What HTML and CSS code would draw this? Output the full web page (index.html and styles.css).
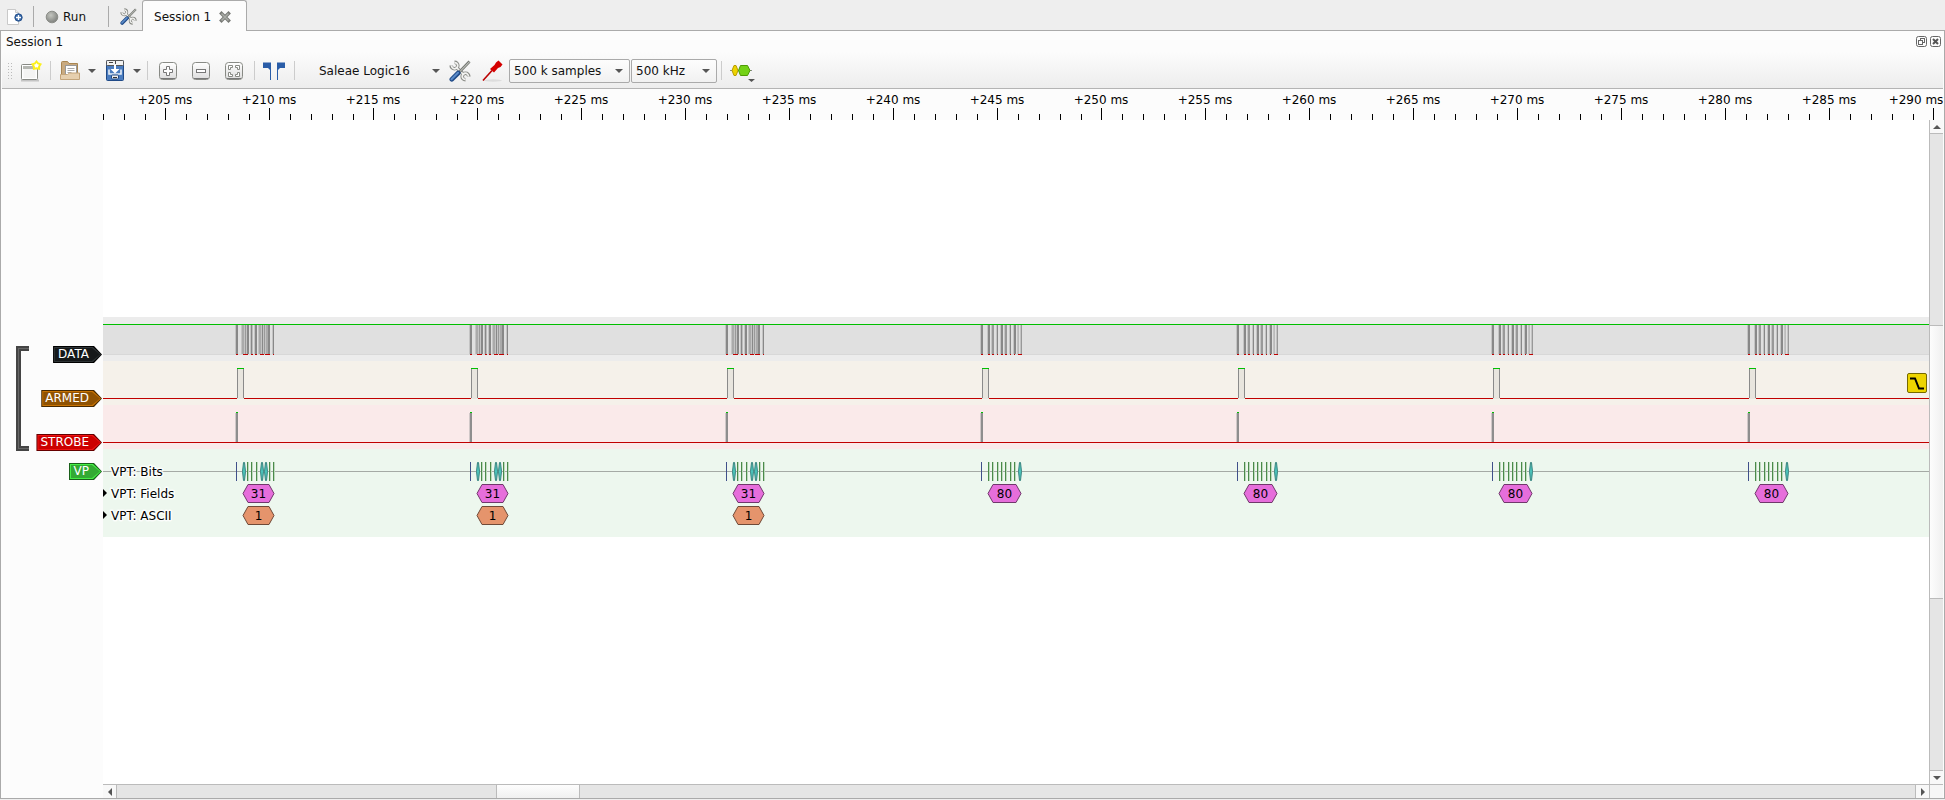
FILE: index.html
```
<!DOCTYPE html>
<html lang="en">
<head>
  <meta charset="UTF-8" />
  <meta name="viewport" content="width=device-width, initial-scale=1.0" />
  <title>Session 1</title>
  <link rel="stylesheet" href="styles.css">
</head>
<body>
  <!-- shared icons -->
  <svg class="defs" width="0" height="0" aria-hidden="true">
    <defs>
      <linearGradient id="metal" x1="0" y1="0" x2="0" y2="1">
        <stop offset="0" stop-color="#ffffff"/>
        <stop offset="1" stop-color="#dcdcdc"/>
      </linearGradient>
      <radialGradient id="ball" cx="0.4" cy="0.35" r="0.6">
        <stop offset="0" stop-color="#c4c6c0"/>
        <stop offset="1" stop-color="#858783"/>
      </radialGradient>
      <symbol id="tools" viewBox="0 0 22 22">
        <g fill="none" stroke="#888a85" stroke-width="3.600">
          <path d="M7 7l8 8"/>
          <path d="M5.500 2.200a3.300 3.300 0 1 1-3.300 3.300"/>
          <path d="M16.500 19.800a3.300 3.300 0 1 1 3.300-3.300"/>
        </g>
        <g fill="none" stroke="#f2f2f0" stroke-width="1.700">
          <path d="M7 7l8 8"/>
          <path d="M5.500 2.600a3.100 3.100 0 1 1-2.900 2.900"/>
          <path d="M16.500 19.400a3.100 3.100 0 1 1 2.900-2.900"/>
        </g>
        <path d="M20.500 1.500 9.500 13" stroke="#777975" stroke-width="2.800"/>
        <path d="M20.500 1.800 9.800 12.700" stroke="#d3d7cf" stroke-width="1"/>
        <path d="M9.200 13 2.800 19.400" stroke="#204a87" stroke-width="4.600" stroke-linecap="round"/>
        <path d="M9 12.800 2.500 19.200" stroke="#5b8bc9" stroke-width="2" stroke-linecap="round"/>
      </symbol>
      <symbol id="key" viewBox="0 0 18 18">
        <rect x=".5" y=".5" width="17" height="17" rx="3" fill="url(#metal)" stroke="#888a85"/>
        <path d="M2 16.500h14" stroke="#777" stroke-width="1"/>
      </symbol>
    </defs>
  </svg>

  <header class="tabbar">
    <button class="flat add" aria-label="New session">
      <svg width="16" height="16" viewBox="0 0 16 16">
        <path d="M.5.500h8l3 3v12H.5z" fill="#fff" stroke="#c9c9c9"/>
        <path d="M8.500.500v3h3" fill="#eee" stroke="#c9c9c9"/>
        <circle cx="11.500" cy="8.500" r="3.700" fill="#3465a4" stroke="#2a5590"/>
        <path d="M11.500 6v5M9 8.500h5" stroke="#fff" stroke-width="1.400"/>
      </svg>
    </button>
    <span class="bar-line"></span>
    <button class="flat run">
      <svg width="14" height="14" viewBox="0 0 14 14"><circle cx="7" cy="7" r="5.800" fill="url(#ball)" stroke="#8b8d88"/></svg>
      Run
    </button>
    <span class="bar-line"></span>
    <button class="flat settings" aria-label="Settings"><svg width="17" height="17"><use href="#tools"/></svg></button>
    <div class="tab">
      <span>Session 1</span>
      <button class="flat" aria-label="Close session">
        <svg width="12" height="12" viewBox="0 0 12 12"><path d="M2.500 2.500l7 7M9.500 2.500l-7 7" stroke="#777975" stroke-width="3.400" stroke-linecap="square"/><path d="M2.500 2.500l7 7M9.500 2.500l-7 7" stroke="#aaaca7" stroke-width="1.600"/></svg>
      </button>
    </div>
  </header>

  <main class="pane">
    <div class="dock-title">
      <span>Session 1</span>
      <button class="flat" aria-label="Float">
        <svg width="11" height="11" viewBox="0 0 11 11" fill="none" stroke="#666"><rect x=".5" y=".5" width="10" height="10" rx="2"/><rect x="4.500" y="2.500" width="4" height="4"/><rect x="2.500" y="4.500" width="4" height="4" fill="#fcfcfc"/></svg>
      </button>
      <button class="flat" aria-label="Close">
        <svg width="11" height="11" viewBox="0 0 11 11" fill="none" stroke="#666"><rect x=".5" y=".5" width="10" height="10" rx="2"/><path d="M3 3l5 5M8 3l-5 5" stroke="#555" stroke-width="2"/></svg>
      </button>
    </div>

    <div class="toolbar">
      <span class="grip"></span>
      <button class="flat new" aria-label="New view">
        <svg width="22" height="22" viewBox="0 0 22 22">
          <path d="M1 20.500h18" stroke="#999" stroke-width="2" opacity=".5"/>
          <rect x="1.500" y="4.500" width="16" height="15" rx="1" fill="#fff" stroke="#888a85"/>
          <path d="M3 7.500h13" stroke="#b5b7b2" stroke-width="3"/>
          <rect x="3.500" y="9" width="12" height="9" fill="#f4f4f3"/>
          <path d="M16.500 1.500l1.600 2 2.400.8-1.400 2.200v2.300l-2.600-.6-2.600.6v-2.300l-1.400-2.200 2.400-.8z" fill="#fff" stroke="#fcf01c" stroke-width="2"/>
        </svg>
      </button>
      <span class="sep"></span>
      <button class="flat open" aria-label="Open">
        <svg width="20" height="21" viewBox="0 0 20 21">
          <path d="M1.500 19V2.500q0-1 1-1h5l1.500 2h8.500V19z" fill="#c9aa80" stroke="#a98652"/>
          <rect x="5.500" y="5.500" width="11" height="10" fill="#fff" stroke="#999"/>
          <path d="M7.500 8.500h7M7.500 10.500h7M7.500 12.500h4" stroke="#aaa"/>
          <path d="M.5 19.500v-5h7l2-1.500h10v6.500z" fill="#e6cfae" stroke="#c4a57b"/>
        </svg>
        <i class="caret"></i>
      </button>
      <button class="flat save" aria-label="Save">
        <svg width="18" height="21" viewBox="0 0 18 21">
          <rect x=".5" y=".5" width="17" height="20" rx="1" fill="#4a7cbf" stroke="#204a87"/>
          <rect x=".5" y=".5" width="17" height="5" rx="1" fill="#f2f2f2" stroke="#555"/>
          <path d="M3 9.500v4.500h12V9.500" fill="none" stroke="#e8eef6" stroke-width="1.600"/>
          <path d="M8 5h2v4h3.500L9 13.500 4.500 9H8z" fill="#fff"/>
          <rect x="5.500" y="15" width="7" height="4" rx="1" fill="#eee" stroke="#204a87"/>
          <path d="M7 17.500h4" stroke="#333"/>
          <path d="M3 2.500h4M9.500 1v3" stroke="#444"/>
        </svg>
        <i class="caret"></i>
      </button>
      <span class="sep"></span>
      <div class="zooms">
        <button class="flat" aria-label="Zoom in">
          <svg width="18" height="18" viewBox="0 0 18 18"><use href="#key"/><path d="M7.500 4.500h3v3h3v3h-3v3h-3v-3h-3v-3h3z" fill="#fff" stroke="#777"/></svg>
        </button>
        <button class="flat" aria-label="Zoom out">
          <svg width="18" height="18" viewBox="0 0 18 18"><use href="#key"/><rect x="4.500" y="7.500" width="9" height="3" fill="#fff" stroke="#777"/></svg>
        </button>
        <button class="flat" aria-label="Zoom to fit">
          <svg width="18" height="18" viewBox="0 0 18 18"><use href="#key"/><path d="M3.500 3.500h4v2h-2v2h-2zM14.500 3.500h-4v2h2v2h2zM3.500 14.500h4v-2h-2v-2h-2zM14.500 14.500h-4v-2h2v-2h2z" fill="#fff" stroke="#888a85"/></svg>
        </button>
      </div>
      <span class="sep"></span>
      <button class="flat cursors" aria-label="Show cursors">
        <svg width="22" height="18" viewBox="0 0 22 18"><path d="M0 .500h8V18H7V8L5 6H0zM22 .500h-8V18h1V8l2-2h5z" fill="#2a5da8"/></svg>
      </button>
      <span class="sep"></span>
      <label class="combo plain device">
        <select aria-label="Device"><option>Saleae Logic16</option></select>
      </label>
      <button class="flat configure" aria-label="Configure device"><svg width="22" height="22"><use href="#tools"/></svg></button>
      <button class="flat probe" aria-label="Channels">
        <svg width="21" height="22" viewBox="0 0 21 22">
          <ellipse cx="11" cy="20.500" rx="9" ry="1.200" fill="#ddd"/>
          <path d="M1 20.500l9-10" stroke="#b00" stroke-width="1.600"/>
          <path d="M8 9l4.500-4L14 2.500 16.500.500l4 4-2 2.500-2.500 1-4 4.500z" fill="#d40000"/>
        </svg>
      </button>
      <label class="combo samples"><select aria-label="Sample count"><option>500 k samples</option></select></label>
      <label class="combo rate"><select aria-label="Sample rate"><option>500 kHz</option></select></label>
      <span class="sep"></span>
      <button class="flat decoder" aria-label="Add protocol decoder">
        <svg width="26" height="22" viewBox="0 0 26 22">
          <path d="M0 10.500h22" stroke="#888"/>
          <path d="M4 5.500h2l2 5-2 5H4l-2-5z" fill="#edd400" stroke="#b89b00"/>
          <path d="M10.500 5.500h7l2.500 5-2.500 5h-7L8.500 10.500z" fill="#73d216" stroke="#4e9a06"/>
          <path d="M18 19h7l-3.500 3z" fill="#555"/>
        </svg>
      </button>
    </div>

    <div class="view">
      <svg class="ruler" id="ruler"></svg>

      <div class="heads">
        <div class="bracket"></div>
        <div class="tags">
          <button class="tag data"><span>DATA</span></button>
          <button class="tag armed"><span>ARMED</span></button>
          <button class="tag strobe"><span>STROBE</span></button>
          <button class="tag vp"><span>VP</span></button>
        </div>
      </div>

      <div class="plot">
        <svg class="trace data" id="data"></svg>
        <div class="row">
          <svg class="trace armed" id="armed"></svg>
          <svg class="trigger" width="20" height="20" viewBox="0 0 20 20">
            <rect x=".5" y=".5" width="19" height="19" rx="1.500" fill="#edd400" stroke="#766a00"/>
            <path d="M3 5.500h5l4 10h5" fill="none" stroke="#000" stroke-width="2"/>
          </svg>
        </div>
        <svg class="trace strobe" id="strobe"></svg>
        <svg class="trace vp" id="vp"></svg>
      </div>

      <div class="scroll vertical">
        <button aria-label="Scroll up"><svg width="8" height="4"><path d="M0 4l4-4 4 4z" fill="#555"/></svg></button>
        <span class="track before"></span><span class="thumb"></span><span class="track after"></span>
        <button aria-label="Scroll down"><svg width="8" height="4"><path d="M0 0l4 4 4-4z" fill="#555"/></svg></button>
      </div>
      <div class="scroll horizontal">
        <button aria-label="Scroll left"><svg width="4" height="8"><path d="M4 0L0 4l4 4z" fill="#555"/></svg></button>
        <span class="track before"></span><span class="thumb"></span><span class="track after"></span>
        <button aria-label="Scroll right"><svg width="4" height="8"><path d="M0 0l4 4-4 4z" fill="#555"/></svg></button>
      </div>
      <div class="corner"></div>
    </div>
  </main>

  <script src="traces.js"></script>
</body>
</html>
```
FILE: styles.css
```
* {
  box-sizing: border-box;
}
body {
  margin: 0;
  min-height: 100vh;
  display: flex;
  flex-direction: column;
  background: #eee;
  color: #111;
  font: 12px/16px "DejaVu Sans", Verdana, sans-serif;
  padding-bottom: 1px;
}
svg {
  display: block;
  flex: none;
}
.defs {
  position: absolute;
}
button, select {
  font: inherit;
  color: inherit;
}
.flat {
  display: flex;
  align-items: center;
  padding: 0;
  border: 0;
  background: none;
}

/* tabs */
.tabbar {
  display: flex;
  align-items: center;
  height: 31px;
  margin-bottom: -1px;
  padding: 2px 0 0 7px;
}
.bar-line {
  width: 1px;
  height: 21px;
  background: #aaa;
  margin-left: 10px;
}
.run {
  gap: 4px;
  margin-left: 11px;
  margin-right: 12px;
}
.settings {
  margin-left: 11px;
}
.tab {
  display: flex;
  align-items: center;
  align-self: flex-end;
  gap: 8px;
  height: 31px;
  margin-left: 5px;
  padding: 2px 15px 0 11px;
  border: 1px solid #aaa;
  border-bottom: 0;
  border-radius: 3px 3px 0 0;
  background: #fcfcfc;
  z-index: 1;
}

/* session pane */
.pane {
  flex: 1;
  display: flex;
  flex-direction: column;
  border: 1px solid #aaa;
  background: #fcfcfc;
}
.dock-title {
  display: flex;
  align-items: center;
  gap: 3px;
  height: 21px;
  padding: 0 3px 0 5px;
}
.dock-title span {
  flex: 1;
}
.toolbar {
  display: flex;
  align-items: center;
  height: 37px;
  margin: 0 1px;
  padding: 1px 0 0 5px;
  border-bottom: 1px solid #b4b4b4;
  background: linear-gradient(#fcfcfc, #ededed);
}
.grip {
  width: 5px;
  height: 17px;
  background: radial-gradient(circle, #bbb 1px, transparent 1px) 0 0 / 3px 3px;
}
.sep {
  width: 1px;
  height: 19px;
  background: #ccc;
}
.caret {
  width: 0;
  border: 4px solid transparent;
  border-top-color: #555;
  border-bottom: 0;
}
.new {
  margin: 0 8px 0 8px;
}
.open {
  gap: 8px;
  margin-left: 9px;
}
.save {
  gap: 9px;
  margin: 0 6px 0 10px;
}
.zooms {
  display: flex;
  gap: 15px;
  margin: 0 11px 0 11px;
}
.cursors {
  margin: 0 9px 0 8px;
}
.combo {
  display: flex;
  align-items: center;
  position: relative;
}
.combo::after {
  content: "";
  position: absolute;
  right: 7px;
  border: 4px solid transparent;
  border-top-color: #555;
  border-bottom: 0;
  pointer-events: none;
}
.combo select {
  appearance: none;
  width: 100%;
  height: 24px;
  padding: 0 4px;
  border: 1px solid #aaa;
  border-radius: 2px;
  background: linear-gradient(#fdfdfd, #f1f1f1);
}
.combo.plain select {
  border-color: transparent;
  background: none;
}
.device {
  width: 130px;
  margin-left: 19px;
}
.combo.device::after {
  right: 4px;
}
.configure {
  margin-left: 5px;
}
.probe {
  margin: 0 6px 0 11px;
}
.samples {
  width: 121px;
}
.rate {
  width: 86px;
  margin: 0 4px 0 1px;
}
.decoder {
  margin-left: 8px;
}

/* trace view */
.view {
  flex: 1;
  display: grid;
  grid-template-columns: 102px 1fr 14px;
  grid-template-rows: 31px 1fr 14px;
  margin-right: 1px;
}
.ruler {
  grid-column: 2 / 4;
  width: 100%;
  height: 31px;
}
.heads {
  grid-row: 2 / 4;
  grid-column: 1;
  display: flex;
  justify-content: space-between;
  align-items: flex-start;
  padding: 226px 1px 0 15px;
}
.bracket {
  width: 13px;
  height: 105px;
  border: 5px double #444;
  border-right: 0;
  background: #666;
  clip-path: polygon(0 0, 100% 0, 100% 5px, 5px 5px, 5px calc(100% - 5px), 100% calc(100% - 5px), 100% 100%, 0 100%);
}
.tags {
  display: flex;
  flex-direction: column;
  align-items: flex-end;
  gap: 27px;
}
.tag {
  --edge: #000;
  --light: #2e3436;
  --fill: #16191a;
  position: relative;
  isolation: isolate;
  height: 17px;
  padding: 0 13px 0 5px;
  border: 0;
  color: #fff;
  line-height: 17px;
  background: var(--edge);
}
.tag, .tag::before, .tag::after {
  clip-path: polygon(0 0, calc(100% - 8px) 0, 100% 50%, calc(100% - 8px) 100%, 0 100%);
}
.tag::before, .tag::after {
  content: "";
  position: absolute;
  inset: 1px;
  z-index: -1;
  background: var(--light);
}
.tag::after {
  inset: 2px;
  background: var(--fill);
}
.tag.armed {
  --edge: #472901;
  --light: #c87303;
  --fill: #8f5202;
  padding-left: 4px;
}
.tag.strobe {
  --edge: #660000;
  --light: #f01414;
  --fill: #cc0000;
  padding-left: 4px;
}
.tag.vp {
  --edge: #1a5f1a;
  --light: #45ee45;
  --fill: #33aa33;
  margin-top: -15px;
}
.plot {
  grid-row: 2;
  grid-column: 2;
  min-width: 0;
  padding-top: 197px;
  background: #fff;
}
.trace {
  width: 100%;
  height: 44px;
}
.trace.data {
  background: #ececec;
}
.trace.armed {
  background: #f5f1ea;
}
.trace.strobe {
  background: #faeaea;
}
.trace.vp {
  height: 88px;
  background: #edf7ee;
}
.row {
  position: relative;
}
.trigger {
  position: absolute;
  top: 12px;
  right: 2px;
}
.halo {
  stroke: #fff;
  stroke-opacity: 0.8;
  stroke-width: 3px;
  stroke-linejoin: round;
  paint-order: stroke;
}

/* scroll bars */
.scroll {
  display: flex;
  background: #e5e5e5;
}
.scroll button {
  display: flex;
  align-items: center;
  justify-content: center;
  flex: 0 0 13px;
  padding: 0;
  border: 0;
  background: #f8f8f8;
}
.vertical {
  grid-row: 2;
  grid-column: 3;
  flex-direction: column;
  border-left: 1px solid #bbb;
}
.horizontal {
  grid-row: 3;
  grid-column: 2;
  border-top: 1px solid #bbb;
}
.vertical .track {
  border-top: 1px solid #bbb;
  border-bottom: 1px solid #bbb;
}
.horizontal .track {
  border-left: 1px solid #bbb;
  border-right: 1px solid #bbb;
}
.vertical .before { flex: 192; }
.vertical .thumb { flex: 274; background: linear-gradient(90deg, #fdfdfd, #f0f0f0); }
.vertical .after { flex: 172; }
.horizontal .before { flex: 380; }
.horizontal .thumb { flex: 82; background: linear-gradient(#fdfdfd, #f0f0f0); }
.horizontal .after { flex: 1338; }
.corner {
  grid-row: 3;
  grid-column: 3;
  border-top: 1px solid #bbb;
  border-left: 1px solid #bbb;
  background: #f6f6f6;
}
```
FILE: traces.js
```
const PX_PER_MS = 20.8;
const START_MS = 202;

// strobe position of each transfer, in px from the left of the plot
const transfers = [
  { x: 133, value: "31", ascii: "1" },
  { x: 367, value: "31", ascii: "1" },
  { x: 623, value: "31", ascii: "1" },
  { x: 878, value: "80" },
  { x: 1134, value: "80" },
  { x: 1389, value: "80" },
  { x: 1645, value: "80" }
];

// data edges: [offset, width, colour]
const edges = {
  "31": [[0, 2, "#888"], [6, 2, "#aaa"], [9, 1, "#999"], [11, 2, "#888"], [15, 1, "#888"], [16, 1, "#bbb"], [19, 2, "#888"], [23, 2, "#aaa"], [26, 1, "#888"], [28, 1, "#999"], [30, 2, "#aaa"], [32, 2, "#888"], [37, 1, "#888"]],
  "80": [[0, 2, "#888"], [7, 2, "#888"], [11, 2, "#999"], [16, 1, "#888"], [20, 2, "#888"], [24, 2, "#999"], [29, 1, "#888"], [33, 2, "#888"], [37, 1, "#bbb"], [40, 1, "#999"]]
};
const lows = {
  "31": [[0, 2], [7, 5], [15, 2], [19, 2], [24, 4], [29, 5], [37, 1]],
  "80": [[0, 2], [7, 2], [11, 2], [16, 1], [20, 2], [24, 2], [29, 1], [33, 1], [37, 4]]
};
// decoded bits: narrow ones are lines, wide ones are cells
const bits = {
  "31": { lines: [11, 15, 20, 33, 37], cells: [6, 24, 28] },
  "80": { lines: [7, 11, 16, 20, 24, 29, 33], cells: [37] }
};

const rect = (x, y, w, h, fill) => `<rect x="${x}" y="${y}" width="${w}" height="${h}" fill="${fill}"/>`;

function hexagon(x, y, w, h, cut, fill, stroke) {
  const mid = y + h / 2;
  return `<path d="M${x} ${mid}L${x + cut} ${y}H${x + w - cut}L${x + w} ${mid}L${x + w - cut} ${y + h}H${x + cut}Z" fill="${fill}" stroke="${stroke}"/>`;
}

function drawRuler() {
  const svg = document.getElementById("ruler");
  const width = svg.clientWidth;
  let out = "";
  for (let t = START_MS; (t - START_MS) * PX_PER_MS < width; t++) {
    const x = Math.round((t - START_MS) * PX_PER_MS);
    const major = t % 5 === 0;
    out += rect(x, major ? 19 : 25, 1, major ? 12 : 6, "#000");
    if (major) {
      out += `<text x="${Math.min(x, width - 27)}" y="15" text-anchor="middle">+${t} ms</text>`;
    }
  }
  svg.innerHTML = out;
}

function drawTraces() {
  let data = rect(0, 7, "100%", 31, "#e0e0e0") + rect(0, 37, "100%", 1, "#d8d8d8") + rect(0, 7, "100%", 1, "#00c000");
  let armed = rect(0, 37, "100%", 1, "#c00000");
  let strobe = rect(0, 37, "100%", 1, "#c00000");
  let vp = rect(0, 22, "100%", 1, "#a5aaa5");

  for (const { x, value, ascii } of transfers) {
    for (const [dx, w] of edges[value]) data += rect(x + dx - 1, 8, w + 1, 29, "#c4c4c4");
    for (const [dx, w, colour] of edges[value]) data += rect(x + dx, 8, w, 29, colour);
    for (const [dx, w] of lows[value]) data += rect(x + dx, 37, w, 1, "#c00000");

    armed += rect(x + 1, 8, 7, 30, "#e8e5de") + rect(x + 1, 8, 1, 29, "#8a8a8a") + rect(x + 7, 8, 1, 29, "#8a8a8a");
    armed += rect(x + 1, 7, 7, 1, "#00c000");
    strobe += rect(x - 1, 8, 1, 29, "#d0c8c8") + rect(x, 8, 2, 29, "#8e8e8e") + rect(x, 7, 2, 1, "#00c000");

    vp += rect(x, 13, 1, 19, "#40508a");
    for (const dx of bits[value].lines) vp += rect(x + dx, 13, 1, 19, "#4a8a4a") + rect(x + dx + 1, 13, 1, 19, "#bcd8bc");
    for (const dx of bits[value].cells) vp += hexagon(x + dx + 0.5, 13.5, 3, 18, 1, "#4cc4bc", "#3a8480");

    const w = value === "80" ? 33 : 31;
    const mid = x + 7 + w / 2;
    vp += hexagon(x + 7, 35.5, w, 18, 5, "#e66edb", "#70386b");
    vp += `<text x="${mid}" y="49" text-anchor="middle">${value}</text>`;
    if (ascii) {
      vp += hexagon(x + 7, 57.5, w, 18, 5, "#e5946c", "#6f4a38");
      vp += `<text x="${mid}" y="71" text-anchor="middle">${ascii}</text>`;
    }
  }

  vp += `<path d="M0 40l4 4-4 4zM0 62l4 4-4 4z"/>`;
  ["VPT: Bits", "VPT: Fields", "VPT: ASCII"].forEach((name, i) => {
    vp += `<text class="halo" x="8" y="${27 + i * 22}">${name}</text>`;
  });

  document.getElementById("data").innerHTML = data;
  document.getElementById("armed").innerHTML = armed;
  document.getElementById("strobe").innerHTML = strobe;
  document.getElementById("vp").innerHTML = vp;
}

drawRuler();
drawTraces();
window.addEventListener("resize", drawRuler);
```
